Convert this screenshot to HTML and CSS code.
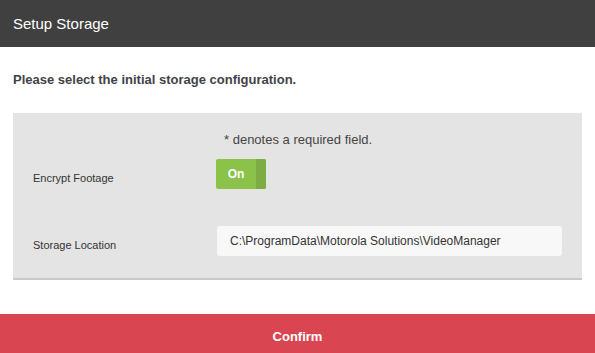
FILE: index.html
```html
<!DOCTYPE html>
<html lang="en">
<head>
    <meta charset="UTF-8">
    <meta name="viewport" content="width=device-width, initial-scale=1.0">
    <title>Setup Storage</title>
    <link rel="stylesheet" href="styles.css">
</head>
<body>
    <div id="dialog">
        <div class="dialog-header">Setup Storage</div>
        <div class="dialog-body">
            <p class="intro">Please select the initial storage configuration.</p>
            <div class="panel">
                <p class="required-note">* denotes a required field.</p>
                <div class="form-row">
                    <label class="field-label">Encrypt Footage</label>
                    <div class="toggle">
                        <span class="toggle-text">On</span>
                        <span class="toggle-knob"></span>
                    </div>
                </div>
                <div class="form-row">
                    <label class="field-label" for="storageLocation">Storage Location</label>
                    <input id="storageLocation" class="text-input" type="text" value="C:\ProgramData\Motorola Solutions\VideoManager">
                </div>
            </div>
        </div>
        <button class="confirm-btn">Confirm</button>
    </div>
</body>
</html>
```

FILE: styles.css
```css
* {
    margin: 0;
    padding: 0;
    box-sizing: border-box;
}

body {
    font-family: 'Liberation Sans', Arial, sans-serif;
    background: #fff;
    color: #444;
}

#dialog {
    display: flex;
    flex-direction: column;
    width: 595px;
    height: 353px;
}

.dialog-header {
    height: 47px;
    background: #404040;
    color: #fff;
    font-size: 15px;
    line-height: 47px;
    padding-left: 13px;
}

.dialog-body {
    flex: 1;
    padding: 24px 13px 0 13px;
}

.intro {
    font-size: 13px;
    font-weight: bold;
    color: #3f4347;
    line-height: 18px;
    margin-bottom: 24px;
}

.panel {
    background: #e4e4e4;
    border-bottom: 2px solid #c9c9c9;
    padding: 18px 20px 20px 20px;
    height: 167px;
}

.required-note {
    font-size: 13px;
    color: #444;
    line-height: 18px;
    padding-left: 191px;
    margin-bottom: 10px;
}

.form-row {
    display: grid;
    grid-template-columns: 183px 1fr;
    align-items: center;
    height: 30px;
    margin-bottom: 37px;
}

.form-row + .form-row {
    margin-top: 1px;
}

.field-label {
    font-size: 11px;
    color: #333;
    padding-top: 8px;
}

.toggle {
    display: flex;
    width: 50px;
    height: 30px;
    background: #8bc34a;
    border-radius: 2px;
    overflow: hidden;
}

.toggle-text {
    flex: 1;
    color: #fff;
    font-size: 12px;
    font-weight: bold;
    line-height: 30px;
    text-align: center;
}

.toggle-knob {
    width: 10px;
    background: #7dac45;
}

.text-input {
    width: 345px;
    height: 30px;
    margin-left: 1px;
    border: none;
    border-radius: 3px;
    background: #f8f8f8;
    font-family: 'Liberation Sans', Arial, sans-serif;
    font-size: 12px;
    color: #333;
    padding-left: 13px;
    outline: none;
}

.confirm-btn {
    height: 39px;
    padding-top: 5px;
    border: none;
    background: #d94651;
    color: #fff;
    font-family: 'Liberation Sans', Arial, sans-serif;
    font-size: 13px;
    font-weight: bold;
    cursor: pointer;
}
```
